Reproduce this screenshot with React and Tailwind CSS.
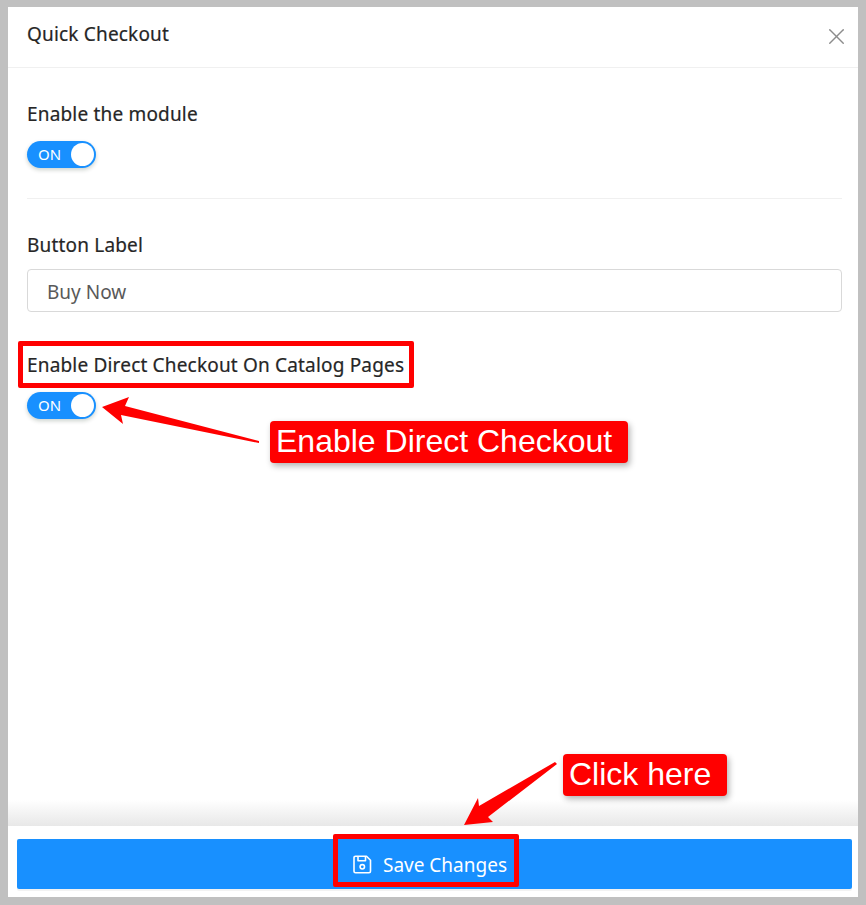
import React from 'react';
import { X } from 'lucide-react';

const font = { fontFamily: '"Noto Sans", sans-serif' };

const Toggle = () => (
    <div className="w-[69px] h-[27px] rounded-full bg-[#1890ff] flex items-center justify-between pl-[11px] pr-[2px] shadow-[0_2px_4px_rgba(0,35,11,0.2)]">
        <span className="text-[15px] text-white leading-none">ON</span>
        <span className="w-[23px] h-[23px] rounded-full bg-white"></span>
    </div>
);

const Callout = ({ className, children }) => (
    <div className={`absolute h-[42px] flex items-center pl-[6px] pb-[3px] bg-[#ff0000] rounded-[4px] text-white text-[32px] leading-none shadow-[2px_3px_6px_rgba(0,0,0,0.3)] font-['Liberation_Sans',sans-serif] ${className}`}>
        {children}
    </div>
);

const SaveIcon = () => (
    <svg width="19" height="19" viewBox="0 0 19 19" fill="none" stroke="currentColor" strokeWidth="1.6" strokeLinejoin="round">
        <path d="M2.5 1.2h11l4 4v11.1a1.5 1.5 0 0 1-1.5 1.5H2.5A1.5 1.5 0 0 1 1 16.300V2.700a1.500 1.500 0 0 1 1.500-1.500z" />
        <path d="M5 1.500v4.300h7.500V1.500" />
        <circle cx="9.300" cy="11.800" r="2.200" />
    </svg>
);

export default function App() {
    return (
        <div className="relative w-[866px] h-[905px] bg-[#c0c0c0] pt-[7px] pb-[8px] pl-[8px] pr-[8px] overflow-hidden" style={font}>
            <div className="w-full h-full bg-white flex flex-col text-[#262626]">
                {/* Header */}
                <header className="h-[61px] shrink-0 flex items-center justify-between pl-[19px] pr-[8px] pb-[6px] border-b border-[#f0f0f0]">
                    <h1 className="text-[19px] leading-[26px] tracking-[0.18px] [-webkit-text-stroke:0.2px]">Quick Checkout</h1>
                    <X size={27} strokeWidth={1.3} className="text-[#8c8c8c] mt-[5px]" />
                </header>

                {/* Content */}
                <main className="flex-1 pl-[19px] pr-[16px] pt-[33px] relative">
                    <div className="text-[19px] leading-[26px] tracking-[0.18px] [-webkit-text-stroke:0.2px]">Enable the module</div>
                    <div className="mt-[14px]"><Toggle /></div>
                    <div className="h-px bg-[#f0f0f0] mt-[30px]"></div>

                    <div className="text-[19px] leading-[26px] tracking-[0.18px] [-webkit-text-stroke:0.2px] mt-[33px]">Button Label</div>
                    <div className="mt-[11px] h-[43px] border border-[#d9d9d9] rounded-[4px] flex items-center pl-[19px] pt-[4px] text-[19px] text-[#595959]">Buy Now</div>

                    <div className="text-[19px] leading-[26px] tracking-[0.18px] [-webkit-text-stroke:0.2px] mt-[40px] whitespace-nowrap">Enable Direct Checkout On Catalog Pages</div>
                    <div className="mt-[14px]"><Toggle /></div>
                    <div className="absolute left-0 right-0 bottom-0 h-[26px] bg-gradient-to-b from-white to-[#e8e8e8]"></div>
                </main>

                {/* Footer */}
                <footer className="h-[71px] shrink-0 bg-white pt-[13px] pl-[9px] pr-[6px]">
                    <button className="w-full h-[50px] bg-[#1890ff] rounded-[2px] flex items-center justify-center gap-[11px] pr-[9px] text-white text-[19px] shadow-[0_2px_0_rgba(0,0,0,0.05)]">
                        <SaveIcon />
                        <span className="mt-[2px]">Save Changes</span>
                    </button>
                </footer>
            </div>

            {/* Annotations */}
            <div className="absolute left-[18px] top-[341px] w-[396px] h-[47px] border-[5px] border-[#ff0000] rounded-[2px]"></div>
            <div className="absolute left-[333px] top-[834px] w-[186px] h-[53px] border-[5px] border-[#ff0000] rounded-[2px]"></div>
            <Callout className="left-[270px] top-[421px] w-[358px]">Enable Direct Checkout</Callout>
            <Callout className="left-[563px] top-[754px] w-[164px]">Click here</Callout>
            <svg className="absolute left-0 top-0 pointer-events-none" width="866" height="905" viewBox="0 0 866 905">
                <polygon fill="#ff0000" points="102,407 129,397 125,406 259,441 259,443 121,415 123,424" />
                <polygon fill="#ff0000" points="464,825 478,798 479,806 555,762 557,764 488,817 493,822" />
            </svg>
        </div>
    );
}
